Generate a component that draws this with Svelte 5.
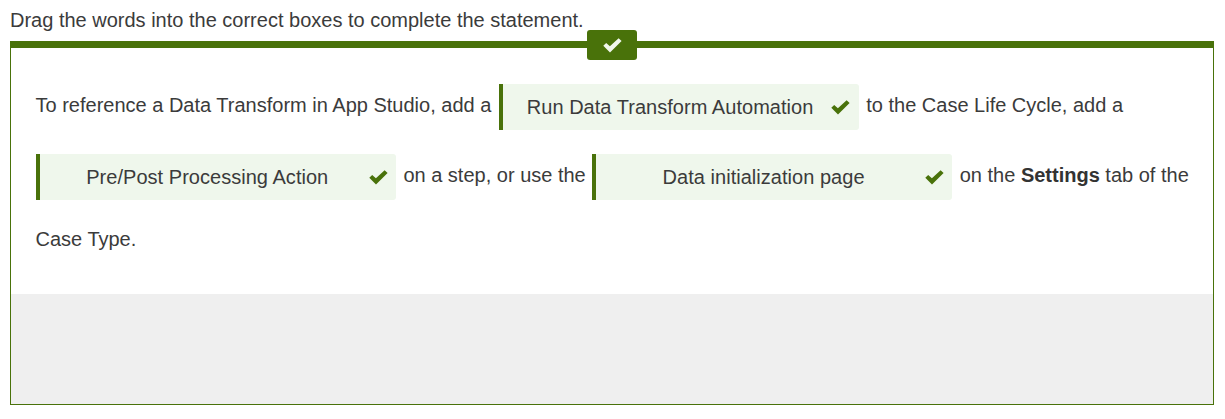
<script>
  const lines = [
    [
      { text: 'To reference a Data Transform in App Studio, add a' },
      { answer: 'Run Data Transform Automation' },
      { text: 'to the Case Life Cycle, add a' },
    ],
    [
      { answer: 'Pre/Post Processing Action' },
      { text: 'on a step, or use the' },
      { answer: 'Data initialization page' },
      { text: 'on the ', bold: 'Settings', rest: ' tab of the' },
    ],
    [{ text: 'Case Type.' }],
  ];
</script>

{#snippet check()}
  <svg class="check" viewBox="0 0 19 15" width="19" height="15" aria-hidden="true">
    <path d="M.3 7.8 3.2 4.9 6.9 8.3 15.6 .2 18.6 3 7 14.6Z" fill="currentColor" />
  </svg>
{/snippet}

<main>
  <p class="prompt">Drag the words into the correct boxes to complete the statement.</p>
  <section class="panel">
    <div class="badge">{@render check()}</div>
    <div class="statement">
      {#each lines as line}
        <div class="line">
          {#each line as part}
            {#if part.answer}
              <span class="slot"><span class="answer">{part.answer}</span>{@render check()}</span>
            {:else}
              <span class="words">{part.text}{#if part.bold}<strong>{part.bold}</strong>{part.rest}{/if}</span>
            {/if}
          {/each}
        </div>
      {/each}
    </div>
    <div class="bank"></div>
  </section>
</main>

<style>
  :global(body) {
    background: #fff;
  }
  main {
    box-sizing: border-box;
    height: 419px;
    padding: 8px 11px 14px 10px;
    display: flex;
    flex-direction: column;
    font: 20px/24px 'Liberation Sans', Arial, sans-serif;
    color: #3b3b3b;
  }
  .prompt {
    margin: 0 0 9px;
  }
  .panel {
    position: relative;
    box-sizing: border-box;
    flex: 1;
    display: flex;
    flex-direction: column;
    border: 1px solid #49720a;
    border-top-width: 7px;
  }
  .badge {
    position: absolute;
    top: -18px;
    left: 576px;
    width: 50px;
    height: 30px;
    border-radius: 3px;
    background: #49720a;
    color: #f0f7ec;
    display: flex;
    align-items: center;
    justify-content: center;
  }
  .check {
    display: block;
    flex: none;
  }
  .statement {
    flex: 1;
    padding: 36px 24px 0 25px;
  }
  .line {
    display: flex;
    align-items: flex-start;
    white-space: nowrap;
    margin-bottom: 24px;
  }
  .line:last-child {
    margin: -6px 0 0;
  }
  .words {
    padding-top: 9px;
  }
  .words:first-child {
    margin-left: -0.5px;
    padding-right: 7.5px;
  }
  .slot + .words {
    padding-left: 7.4px;
  }
  .words:not(:first-child):not(:last-child) {
    padding-right: 6.6px;
  }
  .slot {
    box-sizing: border-box;
    width: 360px;
    height: 46px;
    flex: none;
    display: flex;
    align-items: center;
    padding: 0 8.5px 0 6px;
    border-left: 4px solid #49720a;
    border-radius: 0 3px 3px 0;
    background: #eff7ec;
    color: #49720a;
  }
  .answer {
    flex: 1;
    text-align: center;
    color: #3b3b3b;
    letter-spacing: 0.03px;
  }
  strong {
    color: #333;
  }
  .bank {
    height: 110px;
    background: #efefef;
  }
</style>
